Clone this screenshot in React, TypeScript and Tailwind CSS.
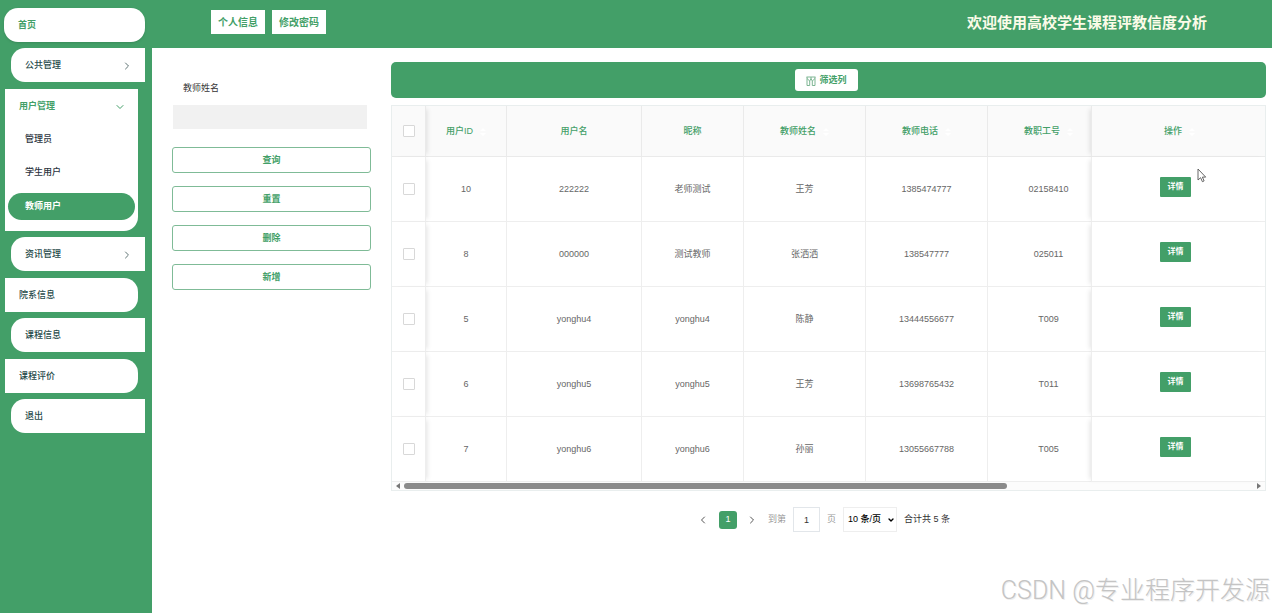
import { ChevronDown, ChevronLeft, ChevronRight } from "lucide-react"
import clsx from "clsx"

const topLinks = ["个人信息", "修改密码"]

const userMenu = [
  { label: "管理员", active: false },
  { label: "学生用户", active: false },
  { label: "教师用户", active: true },
]

const actions = ["查询", "重置", "删除", "新增"]

const columns = [
  { label: "用户ID", width: "w-[81px]", sortable: true },
  { label: "用户名", width: "w-[135px]", sortable: false },
  { label: "昵称", width: "w-[102px]", sortable: false },
  { label: "教师姓名", width: "w-[122px]", sortable: true },
  { label: "教师电话", width: "w-[122px]", sortable: true },
  { label: "教职工号", width: "w-[103px]", sortable: true },
]

const teachers = [
  ["10", "222222", "老师测试", "王芳", "1385474777", "02158410"],
  ["8", "000000", "测试教师", "张洒洒", "138547777", "025011"],
  ["5", "yonghu4", "yonghu4", "陈静", "13444556677", "T009"],
  ["6", "yonghu5", "yonghu5", "王芳", "13698765432", "T011"],
  ["7", "yonghu6", "yonghu6", "孙丽", "13055667788", "T005"],
]

function SideItem({ label, side, arrow }: { label: string; side: "left" | "right"; arrow?: boolean }) {
  return (
    <a
      href="#"
      className={clsx(
        "flex h-[34px] items-center justify-between bg-white pl-[14px] pr-3 pt-px text-[#1f4a4a]",
        side === "left" ? "mb-[6px] ml-[5px] mr-[14px] rounded-r-[14px]" : "mb-[7px] ml-[11px] mr-[7px] rounded-l-[14px]"
      )}
    >
      {label}
      {arrow && <ChevronRight className="h-3 w-3 text-[#5f7474]" strokeWidth={2} />}
    </a>
  )
}

function Sidebar() {
  return (
    <nav className="w-[152px] shrink-0 bg-[#439f68] pt-2 font-medium">
      <a
        href="#"
        className="mb-[6px] ml-1 mr-[7px] flex h-[34px] items-center rounded-[14px] bg-white pl-[14px] pt-px font-bold text-[#439f68] shadow"
      >
        首页
      </a>
      <SideItem label="公共管理" side="right" arrow />

      {/* Expanded group */}
      <div className="mb-[6px] ml-[5px] mr-[14px] rounded-br-[14px] bg-white pb-[11px]">
        <button className="flex h-[34px] w-full items-center justify-between pl-[14px] pr-3 pt-px font-bold text-[#439f68]">
          用户管理
          <ChevronDown className="h-3 w-3" strokeWidth={2} />
        </button>
        {userMenu.map((item) => (
          <a
            key={item.label}
            href="#"
            className={clsx(
              "flex items-center pt-px",
              item.active
                ? "mx-[3px] mt-1 h-[27px] rounded-full bg-[#439f68] pl-[17px] font-bold text-white"
                : "h-[33px] pl-5 text-[#2c3440]"
            )}
          >
            {item.label}
          </a>
        ))}
      </div>

      <SideItem label="资讯管理" side="right" arrow />
      <SideItem label="院系信息" side="left" />
      <SideItem label="课程信息" side="right" />
      <SideItem label="课程评价" side="left" />
      <SideItem label="退出" side="right" />
    </nav>
  )
}

function SearchPanel() {
  return (
    <form className="w-[199px] shrink-0 pt-[33px]">
      <label htmlFor="teacher-name" className="block pl-[11px] leading-[14px] text-[#333]">
        教师姓名
      </label>
      <input
        id="teacher-name"
        type="text"
        className="ml-px mt-[10px] block h-6 w-[194px] bg-[#f1f1f1] px-2 outline-none"
      />
      <div className="mt-[18px] flex flex-col gap-[13px]">
        {actions.map((action) => (
          <button
            key={action}
            type="button"
            className="h-[26px] rounded-[3px] border border-[#7fbb97] pt-px font-bold text-[#439f68]"
          >
            {action}
          </button>
        ))}
      </div>
    </form>
  )
}

function SortIcon() {
  return (
    <svg viewBox="0 0 6 8" className="h-2 w-[6px] fill-white">
      <path d="M3 0 6 3H0zM3 8 0 5h6z" />
    </svg>
  )
}

function CheckBox({ label }: { label: string }) {
  return (
    <input
      type="checkbox"
      aria-label={label}
      className="mx-auto block h-3 w-3 appearance-none rounded-[1px] border border-[#d8d8d8] bg-white"
    />
  )
}

function Pointer() {
  return (
    <svg viewBox="0 0 10 15" className="absolute left-[105px] top-[11px] h-[15px] w-[10px]">
      <path
        d="M1 1v11l2.6-2.3 1.8 4 1.7-.8-1.7-3.8h3.3z"
        fill="#fff"
        stroke="#555"
        strokeWidth="0.9"
        strokeLinejoin="round"
      />
    </svg>
  )
}

function TeacherTable() {
  return (
    <div className="mt-[7px] overflow-hidden border border-[#e9eeee]">
      <table className="w-full table-fixed border-separate border-spacing-0 text-center">
        <thead>
          <tr className="h-[51px] text-[#439f68]">
            <th className="relative w-[34px] border-b border-r border-[#eaeaea] bg-[#fafafa] shadow-[4px_0_5px_-3px_rgba(0,0,0,0.12)]">
              <CheckBox label="全选" />
            </th>
            {columns.map((col, i) => (
              <th
                key={col.label}
                className={clsx(
                  "border-b border-[#eaeaea] bg-[#fafafa] pt-[2px] font-medium",
                  col.width,
                  i === 5 ? "pl-[18px]" : "border-r"
                )}
              >
                <span className="inline-flex items-center gap-[7px]">
                  {col.label}
                  {col.sortable && <SortIcon />}
                </span>
              </th>
            ))}
            <th className="relative w-[176px] border-b border-l border-[#eaeaea] bg-[#fafafa] pt-[2px] font-medium shadow-[-4px_0_5px_-3px_rgba(0,0,0,0.12)]">
              <span className="inline-flex items-center gap-[7px]">
                操作
                <SortIcon />
              </span>
            </th>
          </tr>
        </thead>
        <tbody>
          {teachers.map((row, rowIndex) => (
            <tr key={row[0]} className="h-[65px] text-[#666]">
              <td className="relative border-b border-r border-[#eee] bg-white shadow-[4px_0_5px_-3px_rgba(0,0,0,0.12)]">
                <CheckBox label={`选择 ${row[1]}`} />
              </td>
              {row.map((value, i) => (
                <td key={i} className={clsx("border-b border-[#eee] pt-[2px]", i === 5 ? "pl-[18px]" : "border-r")}>
                  {value}
                </td>
              ))}
              <td className="relative border-b border-l border-[#eee] bg-white pb-[5px] pr-[8px] shadow-[-4px_0_5px_-3px_rgba(0,0,0,0.12)]">
                <button className="h-5 w-[31px] rounded-[1px] bg-[#439f68] text-[8px] font-bold text-white">详情</button>
                {rowIndex === 0 && <Pointer />}
              </td>
            </tr>
          ))}
        </tbody>
      </table>

      {/* Horizontal scroll bar */}
      <div className="flex h-2 items-center gap-1 bg-[#fcfcfc] px-1">
        <svg viewBox="0 0 4 6" className="h-[6px] w-1 fill-[#777]">
          <path d="M4 0v6L0 3z" />
        </svg>
        <div className="flex-1">
          <div className="h-[6px] w-[71%] rounded-full bg-[#8b8b8b]" />
        </div>
        <svg viewBox="0 0 4 6" className="h-[6px] w-1 fill-[#777]">
          <path d="M0 0v6l4-3z" />
        </svg>
      </div>
    </div>
  )
}

function Pagination() {
  return (
    <div className="mt-4 flex h-[25px] items-center justify-center pr-[10px] text-[#333]">
      <button aria-label="上一页" className="text-[#555]">
        <ChevronLeft className="h-3 w-3" strokeWidth={2} />
      </button>
      <button className="ml-[10px] h-[18px] w-[18px] rounded-[3px] bg-[#439f68] pt-px text-white">1</button>
      <button aria-label="下一页" className="ml-[9px] text-[#555]">
        <ChevronRight className="h-3 w-3" strokeWidth={2} />
      </button>
      <label htmlFor="page" className="ml-[10px] text-[#999]">
        到第
      </label>
      <input
        id="page"
        type="text"
        defaultValue="1"
        className="ml-[7px] h-[25px] w-[27px] border border-[#e2e6ea] text-center outline-none"
      />
      <span className="ml-[7px] text-[#999]">页</span>
      <span className="relative ml-[7px] flex items-center">
        <select
          aria-label="每页条数"
          className="h-[25px] w-[54px] appearance-none border border-[#eee] bg-white pl-1 font-medium text-black"
        >
          <option>10 条/页</option>
        </select>
        <ChevronDown className="pointer-events-none absolute right-[2px] h-2 w-2 text-black" strokeWidth={4} />
      </span>
      <span className="ml-[7px]">合计共 5 条</span>
    </div>
  )
}

export default function App() {
  return (
    <div className="relative flex min-h-screen bg-white font-['Liberation_Sans','Noto_Sans_CJK_SC',sans-serif] text-[9px]">
      <Sidebar />
      <div className="min-w-0 flex-1">
        <header className="flex h-12 items-center justify-between bg-[#439f68] pl-[59px] pr-[65px]">
          <div className="flex gap-[7px] pb-1">
            {topLinks.map((link) => (
              <button key={link} className="h-6 w-[54px] bg-white text-[10px] font-bold text-[#439f68]">
                {link}
              </button>
            ))}
          </div>
          <h1 className="pb-[2px] text-[15px] font-bold text-[#fbfbe8]">欢迎使用高校学生课程评教信度分析</h1>
        </header>

        <main className="flex gap-5 pl-5 pr-[6px]">
          <SearchPanel />
          <section className="min-w-0 flex-1 pt-[14px]">
            <div className="flex h-9 items-center justify-center rounded-[5px] bg-[#439f68] pr-1">
              <button className="flex h-[22px] w-[63px] items-center justify-center gap-[3px] rounded-[3px] bg-white pt-px font-bold text-[#439f68]">
                <svg viewBox="0 0 10 10" className="h-[10px] w-[10px]" fill="none" stroke="#6fae88" strokeWidth="0.9">
                  <path d="M.5 1h9M1 1v8.500M9 1v8.500M3.700 5v4.500M6.300 5v4.500M1 9.500h2.700M6.300 9.500H9M1 2.500 3.700 5 5 2.500 6.300 5 9 2.500M5 1v1.500" />
                </svg>
                筛选列
              </button>
            </div>
            <TeacherTable />
            <Pagination />
          </section>
        </main>
      </div>

      <div className="pointer-events-none absolute bottom-1 right-[2px] font-['Roboto','Noto_Sans_CJK_SC',sans-serif] text-[25px] font-light leading-9 text-[#c4c4c4] [text-shadow:1px_1px_0_#eee]">
        CSDN @专业程序开发源
      </div>
    </div>
  )
}
